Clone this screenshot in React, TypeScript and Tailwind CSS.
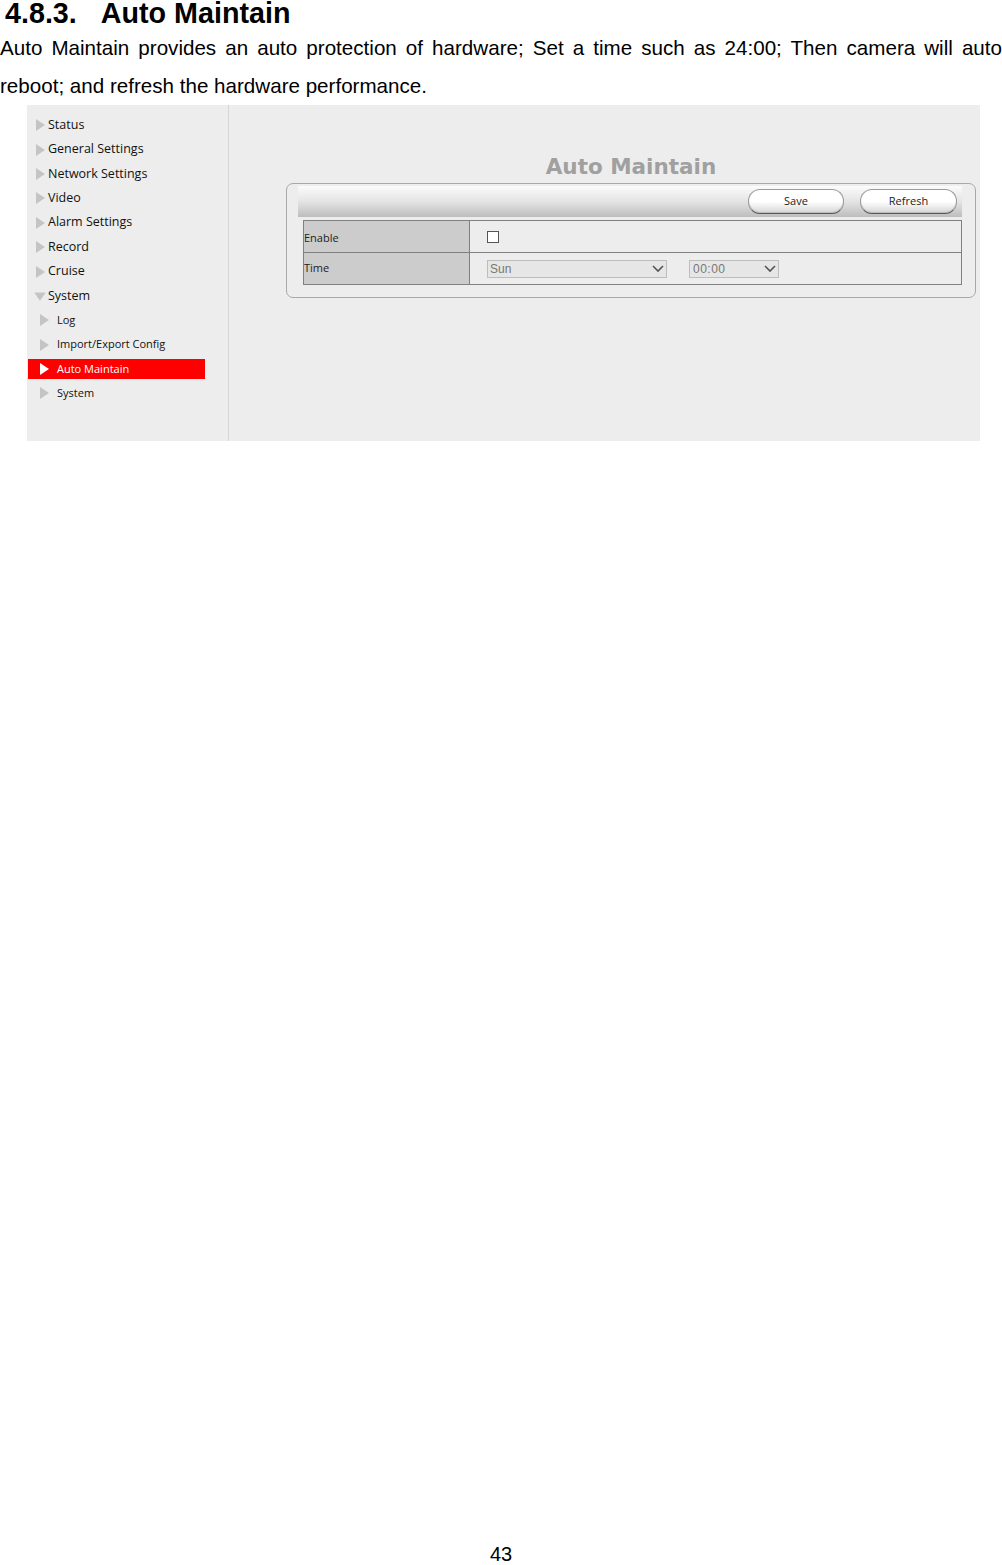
import React from "react";

const menu = [
  "Status",
  "General Settings",
  "Network Settings",
  "Video",
  "Alarm Settings",
  "Record",
  "Cruise",
];

const subMenu = ["Log", "Import/Export Config", "Auto Maintain", "System"];

function Arrow({ down, color = "#c4c4c4", size = 10 }: { down?: boolean; color?: string; size?: number }) {
  return (
    <svg width={size} height={size + 2} viewBox="0 0 10 12" className="shrink-0">
      {down ? (
        <polygon points="0,3 10,3 5,10" fill={color} />
      ) : (
        <polygon points="0,0 9,6 0,12" fill={color} />
      )}
    </svg>
  );
}

function Chevron() {
  return (
    <svg width="12" height="8" viewBox="0 0 12 8">
      <polyline points="1,1 6,6 11,1" fill="none" stroke="#555" strokeWidth="1.6" />
    </svg>
  );
}

function PillButton({ label, w }: { label: string; w: string }) {
  return (
    <button
      className={`${w} h-[25px] rounded-[12px] border border-[#9a9a9a] border-b-[#555] bg-gradient-to-b from-white via-white to-[#d6d6d6] text-[11px] text-[#222] shadow-[inset_0_-1px_1px_#bbb]`}
    >
      {label}
    </button>
  );
}

export default function App() {
  return (
    <div className="w-[1002px] min-h-[1565px] flex flex-col bg-white text-black font-['Liberation_Sans',Arial,sans-serif]">
      <h1 className="pl-[5px] text-[28.7px] font-bold leading-[26px]">
        4.8.3.<span className="inline-block w-[24px]" />Auto Maintain
      </h1>
      <p className="mt-[3px] text-[20.6px] leading-[38px]">
        <span className="block text-justify [text-align-last:justify]">
          Auto Maintain provides an auto protection of hardware; Set a time such as 24:00; Then camera will auto
        </span>
        <span className="block">reboot; and refresh the hardware performance.</span>
      </p>

      <div className="ml-[27px] w-[953px] h-[336px] flex bg-[#ededed] font-['Open_Sans',sans-serif]">
        {/* sidebar */}
        <div className="w-[202px] border-r border-[#d6d6d6] pt-[8px] flex flex-col">
          {menu.map((m) => (
            <div key={m} className="h-[24.4px] flex items-center pl-[9px] gap-[2px] text-[12.5px] text-[#111]">
              <Arrow />
              <span>{m}</span>
            </div>
          ))}
          <div className="h-[24.4px] flex items-center pl-[7px] gap-[2px] text-[12.5px] text-[#111]">
            <Arrow down size={12} />
            <span>System</span>
          </div>
          {subMenu.map((s) => {
            const active = s === "Auto Maintain";
            return (
              <div
                key={s}
                className={`h-[20px] my-[2.2px] w-[177px] ml-[1px] flex items-center pl-[12px] gap-[7px] text-[11px] ${
                  active ? "bg-[#ff0000] text-white" : "text-[#111]"
                }`}
              >
                <Arrow color={active ? "#ffffff" : "#c4c4c4"} />
                <span>{s}</span>
              </div>
            );
          })}
        </div>

        {/* main */}
        <div className="flex-1 pl-[57px] pr-[4px] pt-[48px] flex flex-col">
          <div className="text-center text-[21.5px] leading-[28px] font-bold text-[#a0a0a0] font-['DejaVu_Sans',Verdana,sans-serif]">
            Auto Maintain
          </div>
          <div className="mt-[2px] h-[115px] rounded-[7px] border border-[#a8a8a8] pl-[11px] pr-[13px] pt-[2px]">
            <div className="h-[31px] bg-gradient-to-b from-[#fbfbfb] via-[#e4e4e4] to-[#bdbdbd] flex items-center justify-end gap-[16px] pr-[5px]">
              <PillButton label="Save" w="w-[96px]" />
              <PillButton label="Refresh" w="w-[97px]" />
            </div>
            <div className="mt-[3px] ml-[5px] border border-[#808080] text-[11px] text-[#222]">
              <div className="h-[32px] flex border-b border-[#808080]">
                <div className="w-[166px] bg-[#cccccc] border-r border-[#808080] flex items-center pt-[3px]">Enable</div>
                <div className="flex-1 flex items-center pl-[17px]">
                  <div className="w-[12px] h-[12px] border border-[#555] bg-white" />
                </div>
              </div>
              <div className="h-[31px] flex">
                <div className="w-[166px] bg-[#cccccc] border-r border-[#808080] flex items-center">Time</div>
                <div className="flex-1 flex items-center pl-[17px] gap-[22px] font-['Liberation_Sans',Arial,sans-serif]">
                  <div className="w-[180px] h-[18px] border border-[#bdbdbd] bg-[#e6e6e6] flex items-center justify-between pl-[2px] pr-[2px] text-[12px] text-[#777]">
                    <span>Sun</span>
                    <Chevron />
                  </div>
                  <div className="w-[90px] h-[18px] border border-[#bdbdbd] bg-[#e6e6e6] flex items-center justify-between pl-[3px] pr-[2px] text-[12px] text-[#777] tracking-[0.5px]">
                    <span>00:00</span>
                    <Chevron />
                  </div>
                </div>
              </div>
            </div>
          </div>
        </div>
      </div>

      <div className="flex-1" />
      <div className="text-center text-[20px] leading-[20px] pb-[1px]">43</div>
    </div>
  );
}
